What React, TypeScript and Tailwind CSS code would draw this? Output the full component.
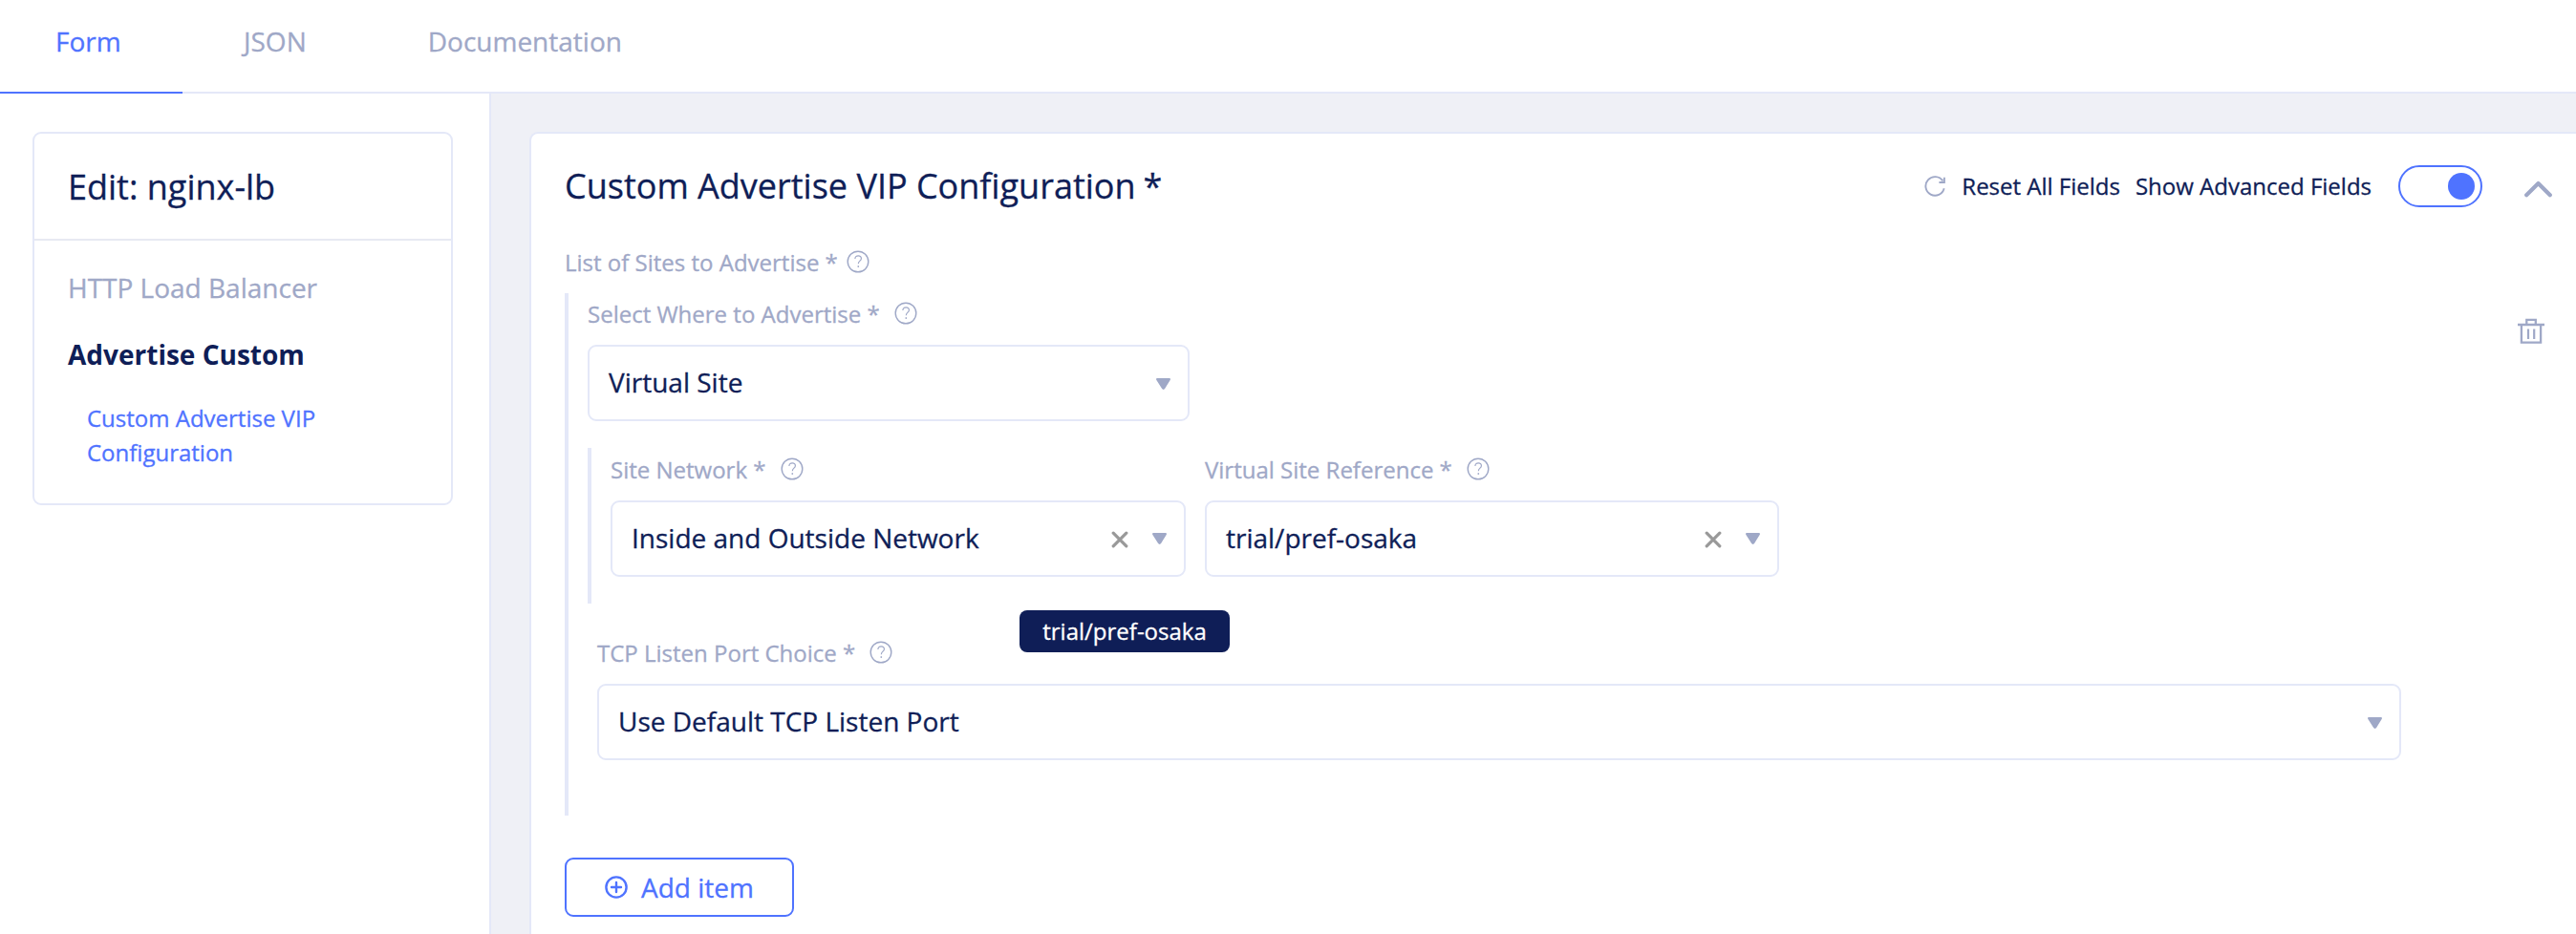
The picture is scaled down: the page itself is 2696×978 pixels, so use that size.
import React from "react";

const HelpIcon = ({ className = "" }: { className?: string }) => (
  <svg viewBox="0 0 24 24" className={`h-6 w-6 shrink-0 ${className}`} fill="none" stroke="#9fa8c7">
    <circle cx="12" cy="12" r="10.8" strokeWidth="1.4" />
    <path d="M8.900 8.900c0-1.900 1.400-3.100 3.300-3.100s3.200 1.200 3.200 2.900c0 2.300-3.100 2.700-3.100 5.500" strokeWidth="1.2" />
    <path d="M12.3 16.2v1.7" strokeWidth="1.5" />
  </svg>
);

const Triangle = ({ className = "" }: { className?: string }) => (
  <svg viewBox="0 0 15 12" className={`h-3 w-[15px] shrink-0 ${className}`} fill="#9fa8c7">
    <path d="M1.200 0h12.600c.9 0 1.400.9 1 1.700l-5.700 9.400c-.6 1.100-2.400 1.100-3 0L.2 1.700C-.2.9.3 0 1.200 0z" />
  </svg>
);

const ClearIcon = () => (
  <svg viewBox="0 0 18 18" className="h-[18px] w-[18px] shrink-0" stroke="#999" strokeWidth="3.200" strokeLinecap="round">
    <path d="M2.200 2.200l13.600 13.600M15.800 2.200L2.200 15.800" />
  </svg>
);

const Label = ({ children, gap = "gap-[15px]" }: { children: React.ReactNode; gap?: string }) => (
  <div className={`flex h-8 items-center text-[24px] leading-8 text-[#9fa8c7] ${gap}`}>
    <span>{children}</span>
    <HelpIcon className="-mt-0.5" />
  </div>
);

const Select = ({ value, clearable = false, className = "" }: { value: string; clearable?: boolean; className?: string }) => (
  <div className={`flex h-20 items-center rounded-[9px] border-2 border-[#e4e8f8] bg-white pl-5 pr-[18px] ${className}`}>
    <span className="flex-1 pb-0.5 text-[28px] leading-10 text-[#0f1e57]">{value}</span>
    {clearable && (
      <span className="mt-0.5 mr-[25px]">
        <ClearIcon />
      </span>
    )}
    <Triangle className={clearable ? "" : "mt-0.5"} />
  </div>
);

export default function App() {
  return (
    <div className="flex h-[978px] w-[2696px] flex-col overflow-hidden bg-white font-['Open_Sans',sans-serif] text-[#0f1e57] [-webkit-text-stroke:0.3px]">
      <nav className="flex h-[98px] shrink-0 border-b-2 border-[#e4e8f8] text-[28px] leading-10 text-[#9fa8c7]">
        <a className="-mb-0.5 w-[191px] border-b-2 border-[#4f73ff] pt-[23px] pl-[58px] text-[#4f73ff]">Form</a>
        <a className="pt-[23px] pl-[64px]">JSON</a>
        <a className="pt-[23px] pl-[127px]">Documentation</a>
      </nav>

      <div className="flex min-h-0 flex-1">
        <aside className="w-[514px] shrink-0 border-r-2 border-[#e4e8f8] pt-10 pl-[34px]">
          <div className="h-[391px] w-[440px] rounded-[9px] border-2 border-[#e4e8f8]">
            <h2 className="h-[112px] border-b-2 border-[#e7e9f2] pt-[31px] pl-[35px] text-[36px] leading-[50px]">Edit: nginx-lb</h2>
            <div className="pt-[29px] pl-[35px]">
              <div className="text-[28px] leading-10 text-[#9fa8c7]">HTTP Load Balancer</div>
              <div className="mt-[30px] text-[28px] leading-10 font-bold [-webkit-text-stroke:0]">Advertise Custom</div>
              <div className="mt-[29px] w-[260px] pl-5 text-[24px] leading-9 text-[#4f73ff]">Custom Advertise VIP Configuration</div>
            </div>
          </div>
        </aside>

        <main className="flex-1 bg-[#eff0f6] pt-10 pl-10">
          <section className="h-[860px] rounded-tl-[9px] border-t-2 border-l-2 border-[#e4e8f8] bg-white pl-[35px]">
            <header className="flex h-[112px] items-center pb-0.5">
              <h1 className="flex-1 text-[36px] leading-[50px]">
                Custom Advertise VIP Configuration<span className="ml-2">*</span>
              </h1>
              <svg viewBox="0 0 24 24" className="mr-4 h-6 w-6" fill="none" stroke="#9fa8c7" strokeWidth="1.900">
                <path d="M21.700 14.200A9.800 9.800 0 1 1 20.300 6.400" />
                <path d="M21.900 2.700v5.300h-5.500" />
              </svg>
              <span className="text-[24px] leading-8">Reset All Fields</span>
              <span className="ml-4 text-[24px] leading-8">Show Advanced Fields</span>
              <span className="ml-7 flex h-11 w-[88px] items-center justify-end rounded-full border-2 border-[#4f73ff] pr-1.5">
                <span className="h-7 w-7 rounded-full bg-[#4f73ff]" />
              </span>
              <svg viewBox="0 0 29 18" className="mt-[6px] mr-[25px] ml-11 h-[18px] w-[29px]" fill="none" stroke="#9fa8c7" strokeWidth="4.200" strokeLinecap="round" strokeLinejoin="round">
                <path d="M2.200 15.200L14.500 3l12.300 12.200" />
              </svg>
            </header>

            <div className="mt-[7px]">
              <Label gap="gap-[9px]">List of Sites to Advertise *</Label>
            </div>

            <div className="mt-4 flex h-[547px] border-l-4 border-[#e4e8f8] pt-[6px] pl-5">
              <div className="flex-1">
                <Label>Select Where to Advertise *</Label>
                <Select value="Virtual Site" className="mt-4 w-[630px]" />

                <div className="relative mt-7 flex h-[163px] gap-5 border-l-4 border-[#e4e8f8] pt-[7px] pl-5">
                  <div className="w-[602px]">
                    <Label>Site Network *</Label>
                    <Select clearable value="Inside and Outside Network" className="mt-4" />
                  </div>
                  <div className="w-[601px]">
                    <Label>Virtual Site Reference *</Label>
                    <Select clearable value="trial/pref-osaka" className="mt-4" />
                  </div>
                  <div className="absolute top-[170px] left-[448px] flex h-11 w-[220px] items-center justify-center rounded-lg bg-[#0f1e57] text-[24px] text-white">
                    trial/pref-osaka
                  </div>
                </div>

                <div className="mt-9 ml-2.5 w-[1888px]">
                  <Label>TCP Listen Port Choice *</Label>
                  <Select value="Use Default TCP Listen Port" className="mt-4" />
                </div>
              </div>
              <svg viewBox="0 0 28 28" className="mt-5 mr-[33px] h-7 w-7 shrink-0" fill="none" stroke="#9fa8c7" strokeWidth="2.300">
                <path d="M0 7h28M3.900 7v18.700h20.200V7M9.300 7V1.900h9.500V7" />
                <path d="M11 11.500v10.500M17.200 11.500v10.500" strokeWidth="2.200" />
              </svg>
            </div>

            <button className="mt-11 flex h-[62px] w-60 items-center rounded-[9px] border-2 border-[#4f73ff] pb-px pl-10 text-[28px] leading-10 text-[#4f73ff]">
              <svg viewBox="0 0 24 24" className="mr-3.5 h-6 w-6" fill="none" stroke="#4f73ff" strokeWidth="2.400">
                <circle cx="12" cy="12" r="10.600" />
                <path d="M12 7v10M7 12h10" strokeLinecap="round" />
              </svg>
              Add item
            </button>
          </section>
        </main>
      </div>
    </div>
  );
}
